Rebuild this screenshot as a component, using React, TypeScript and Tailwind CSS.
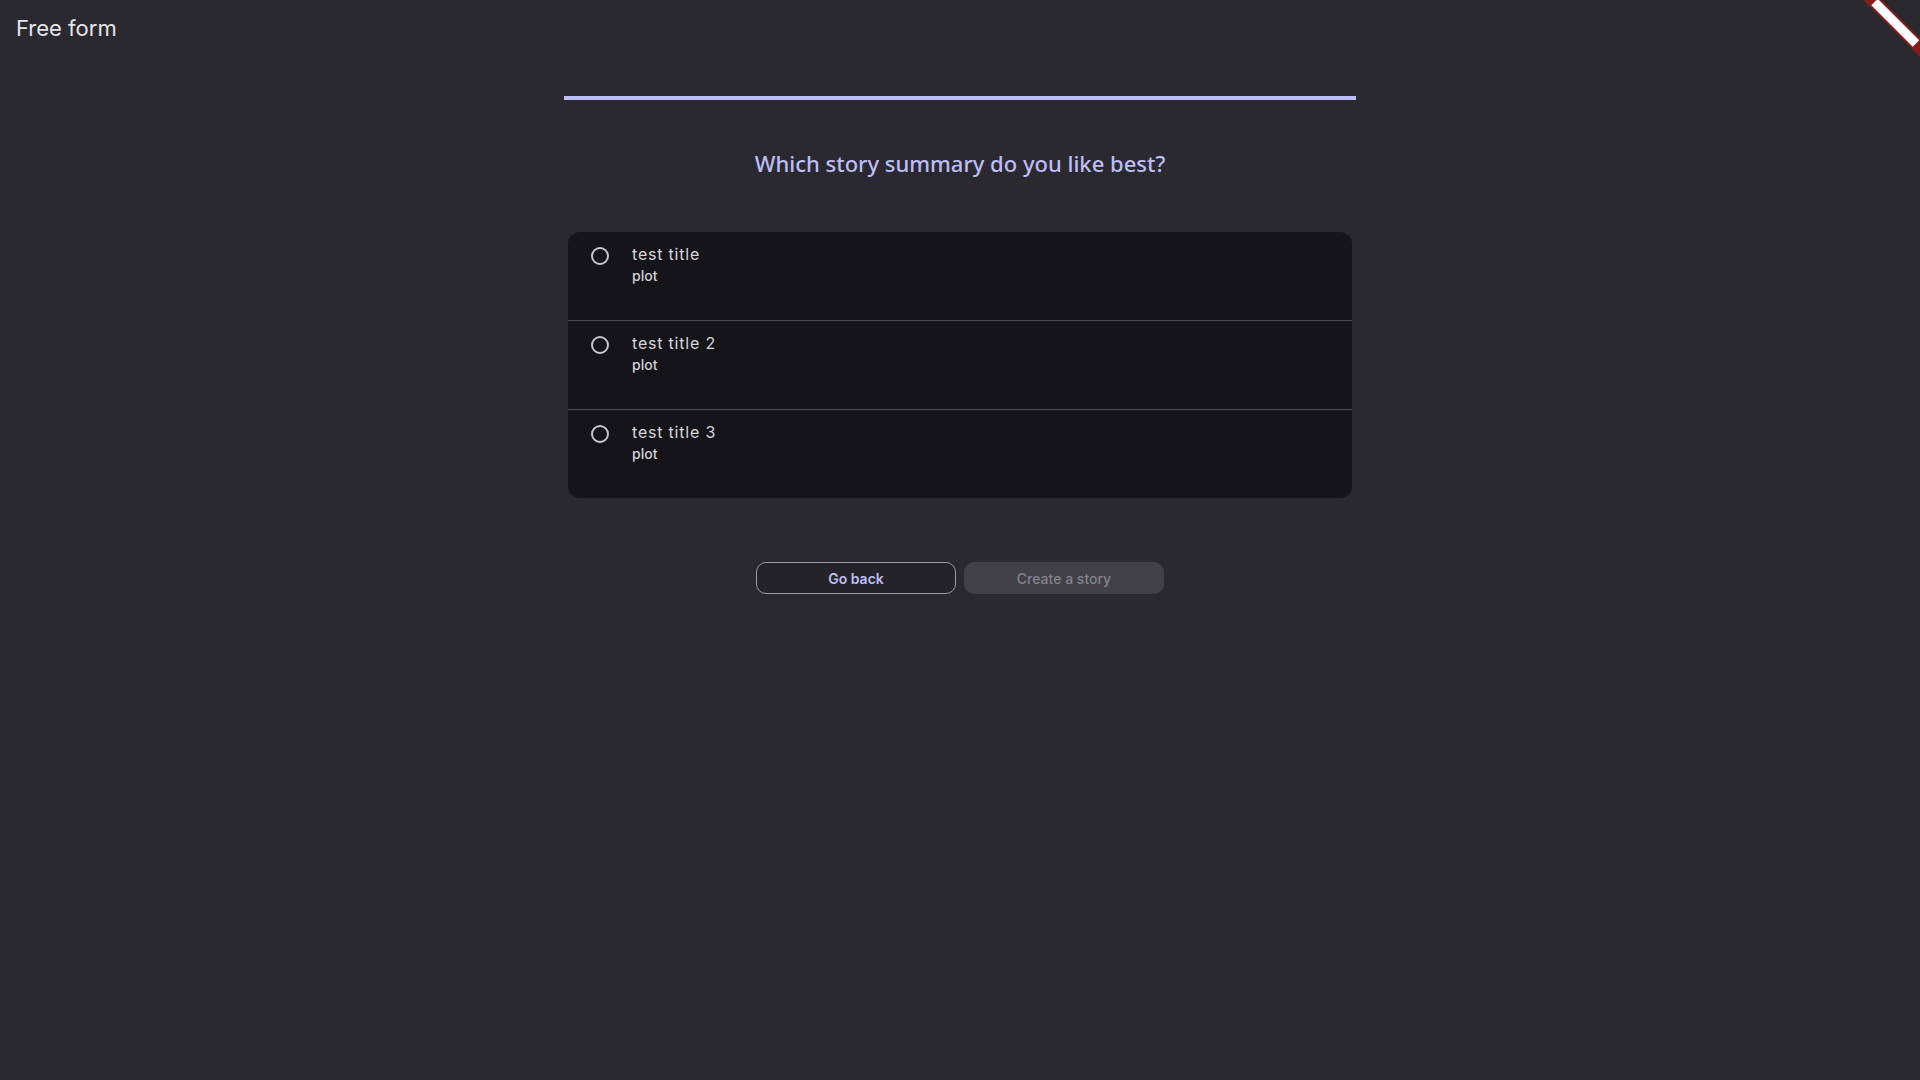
import { useState } from 'react';

const stories = [
  { id: 1, title: 'test title', plot: 'plot' },
  { id: 2, title: 'test title 2', plot: 'plot' },
  { id: 3, title: 'test title 3', plot: 'plot' },
];

function CornerRibbon() {
  return (
    <div className="pointer-events-none absolute right-0 top-0 h-[64px] w-[64px] overflow-hidden">
      <svg width="64" height="64" viewBox="0 0 64 64">
        <line x1="6.5" y1="-10" x2="80" y2="63.5" stroke="#8a1b1b" strokeWidth="13" />
        <line x1="18.5" y1="2" x2="60" y2="43.5" stroke="#ffffff" strokeWidth="9" />
      </svg>
    </div>
  );
}

export default function App() {
  const [selected, setSelected] = useState<number | null>(null);

  return (
    <div className="relative min-h-screen bg-[#2a292f] font-['Inter',sans-serif]">
      <CornerRibbon />

      {/* Header */}
      <header className="px-4 pt-[14px]">
        <h1 className="text-[22px] leading-[28px] text-[#e4e4e8]">Free form</h1>
      </header>

      <main className="mx-auto mt-[54px] flex w-[792px] flex-col items-center">
        {/* Progress */}
        <div className="h-[4px] w-full bg-[#bcbcf6]" />

        <h2 className="mt-[47px] font-['Noto_Sans',sans-serif] text-[22px] font-medium leading-[32px] text-[#bdbdf7]">
          Which story summary do you like best?
        </h2>

        {/* Options */}
        <div className="mt-[53px] w-[784px] overflow-hidden rounded-[12px] bg-[#151419]">
          {stories.map((story, i) => (
            <button
              key={story.id}
              onClick={() => setSelected(story.id)}
              className={`flex w-full items-start gap-[23px] px-[23px] pt-[10px] text-left ${
                i > 0 ? 'h-[89px] border-t border-[#4a4950]' : 'h-[88px]'
              }`}
            >
              <span className="mt-[5px] flex h-[18px] w-[18px] shrink-0 items-center justify-center rounded-full border-2 border-[#c6c6ca]">
                {selected === story.id && <span className="h-[8px] w-[8px] rounded-full bg-[#bdbdf7]" />}
              </span>
              <span className="flex flex-col">
                <span className="text-[16px] leading-[24px] tracking-[0.05em] text-[#d6d6da]">{story.title}</span>
                <span className="text-[14px] font-medium leading-[20px] text-[#d2d2d6]">{story.plot}</span>
              </span>
            </button>
          ))}
        </div>

        {/* Actions */}
        <div className="mt-[64px] flex gap-2">
          <button className="h-[32px] w-[200px] rounded-[10px] border border-[#9a99a0] bg-[#242328] text-[14px] font-semibold text-[#bdbdf7]">
            Go back
          </button>
          <button
            disabled={selected === null}
            className="h-[32px] w-[200px] rounded-[10px] bg-[#414046] text-[14px] font-medium text-[#848389]"
          >
            Create a story
          </button>
        </div>
      </main>
    </div>
  );
}
